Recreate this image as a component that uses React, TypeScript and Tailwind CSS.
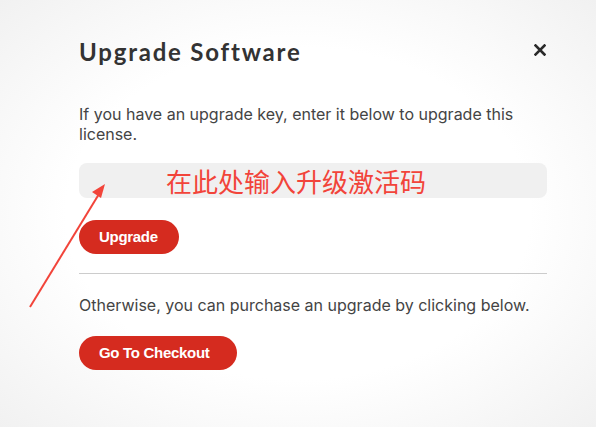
import React from "react";

export default function App() {
  return (
    <div className="relative w-[596px] h-[427px] overflow-hidden bg-[radial-gradient(ellipse_at_center,#ffffff_55%,#f1f1f1_100%)]">
      <div className="pl-[79px] pr-[49px] pt-[37px] flex flex-col" style={{ fontFamily: "Inter, 'Liberation Sans', sans-serif" }}>
        <div className="flex items-start justify-between">
          <h1 className="text-[24px] leading-[29px] font-bold text-[#333333] tracking-[1.8px]" style={{ fontFamily: "Lato, 'DejaVu Sans', sans-serif" }}>
            Upgrade Software
          </h1>
          <svg width="12" height="12" viewBox="0 0 12 12" className="mt-[7px] mr-[1px]">
            <path d="M1.5 1.5 L10.5 10.5 M10.5 1.5 L1.5 10.5" stroke="#2a2a2a" strokeWidth="2.6" strokeLinecap="square" />
          </svg>
        </div>
        <p className="mt-[38px] text-[16px] leading-[20px] text-[#444444] pr-[20px]">
          If you have an upgrade key, enter it below to upgrade this license.
        </p>
        <div className="mt-[19px] h-[35px] rounded-[8px] bg-[#f0f0f0] flex items-center pl-[87px]">
          <span className="text-[26px] leading-none text-[#f2443a]" style={{ fontFamily: "'Noto Sans CJK SC', sans-serif" }}>
            在此处输入升级激活码
          </span>
        </div>
        <button className="mt-[22px] w-[100px] h-[34px] rounded-full bg-[#d52b1f] text-white text-[15px] font-bold tracking-[-0.3px] flex items-center justify-start pl-[20px]" style={{ fontFamily: "'Liberation Sans', Arial, sans-serif" }}>
          Upgrade
        </button>
        <div className="mt-[19px] h-px bg-[#cccccc]" />
        <p className="mt-[21px] text-[16px] leading-[20px] text-[#444444]">
          Otherwise, you can purchase an upgrade by clicking below.
        </p>
        <button className="mt-[21px] w-[158px] h-[34px] rounded-full bg-[#d52b1f] text-white text-[15px] font-bold tracking-[-0.3px] flex items-center justify-start pl-[20px]" style={{ fontFamily: "'Liberation Sans', Arial, sans-serif" }}>
          Go To Checkout
        </button>
      </div>
      <svg className="absolute left-0 top-0 pointer-events-none" width="596" height="427" viewBox="0 0 596 427">
        <line x1="30" y1="307" x2="99" y2="194" stroke="#f2443a" strokeWidth="2" />
        <polygon points="105,184 92,192 101,198" fill="#f2443a" />
      </svg>
    </div>
  );
}
